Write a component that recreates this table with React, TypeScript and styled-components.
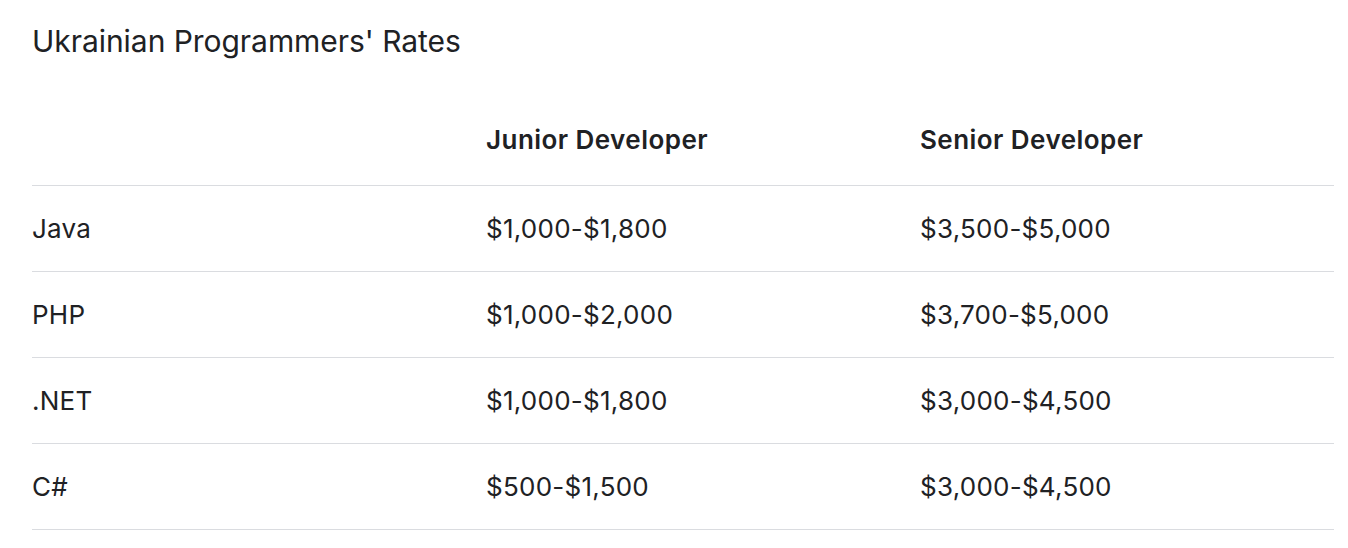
import React from "react";
import styled, { createGlobalStyle } from "styled-components";

const Global = createGlobalStyle`
  html, body { margin: 0; padding: 0; background: #ffffff; }
  body { font-family: Inter, "Open Sans", Roboto, sans-serif; color: #202124; }
`;

const Page = styled.div`
  padding: 23px 14px 0 32px;
`;

const Title = styled.h2`
  margin: 0;
  font-size: 30px;
  font-weight: 400;
  line-height: 36px;
  letter-spacing: -0.05px;
  color: #202124;
`;

const Table = styled.table`
  width: 100%;
  margin-top: 41px;
  border-collapse: collapse;
  table-layout: fixed;
`;

const Cell = styled.td<{ $head?: boolean }>`
  box-sizing: border-box;
  height: ${(p) => (p.$head ? "85px" : "86px")};
  padding: 0 0 ${(p) => (p.$head ? "6px" : "0")} 0;
  vertical-align: middle;
  text-align: left;
  font-size: 26px;
  font-weight: ${(p) => (p.$head ? 600 : 400)};
  letter-spacing: ${(p) => (p.$head ? "0.45px" : "0.25px")};
  color: #202124;
  border-bottom: 1.5px solid #dadce0;
`;

const Col = styled.col<{ $w?: number }>`
  width: ${(p) => (p.$w ? `${p.$w}px` : "auto")};
`;

const rows: [string, string, string][] = [
  ["Java", "$1,000-$1,800", "$3,500-$5,000"],
  ["PHP", "$1,000-$2,000", "$3,700-$5,000"],
  [".NET", "$1,000-$1,800", "$3,000-$4,500"],
  ["C#", "$500-$1,500", "$3,000-$4,500"],
];

export default function App() {
  return (
    <Page>
      <Global />
      <Title>Ukrainian Programmers' Rates</Title>
      <Table>
        <colgroup>
          <Col $w={454} />
          <Col $w={434} />
          <Col />
        </colgroup>
        <thead>
          <tr>
            <Cell as="th" $head></Cell>
            <Cell as="th" $head>Junior Developer</Cell>
            <Cell as="th" $head>Senior Developer</Cell>
          </tr>
        </thead>
        <tbody>
          {rows.map((r) => (
            <tr key={r[0]}>
              <Cell>{r[0]}</Cell>
              <Cell>{r[1]}</Cell>
              <Cell>{r[2]}</Cell>
            </tr>
          ))}
        </tbody>
      </Table>
    </Page>
  );
}
